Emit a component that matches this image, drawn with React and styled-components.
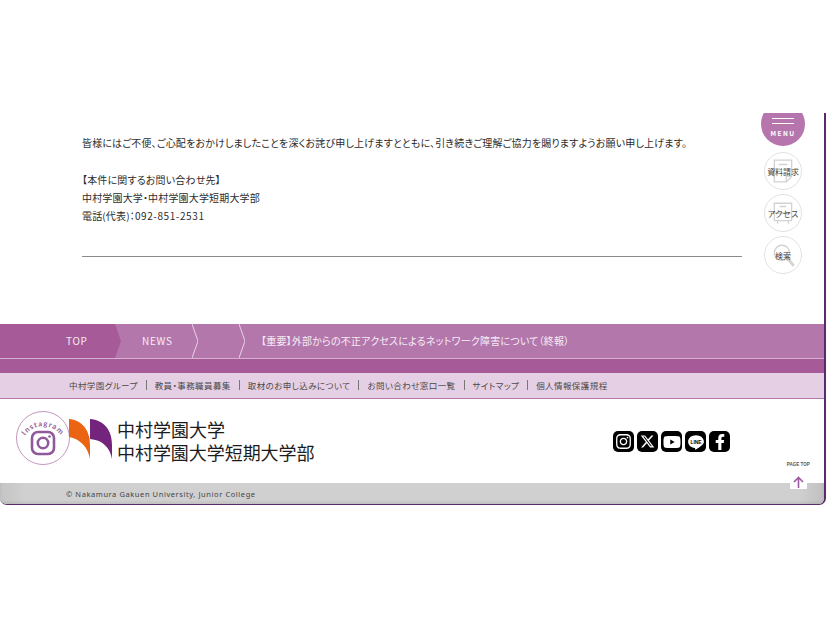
import React from "react";
import styled, { createGlobalStyle } from "styled-components";
import { FaInstagram, FaYoutube, FaFacebookF } from "react-icons/fa";
import { FaXTwitter } from "react-icons/fa6";

const GlobalStyle = createGlobalStyle`
  html, body {
    margin: 0;
    padding: 0;
    background: #fff;
  }
  body {
    font-family: "Noto Sans CJK JP", "Noto Sans", sans-serif;
    color: #333;
  }
`;

const Page = styled.div`
  width: 826px;
  height: 620px;
  padding-top: 113px;
  box-sizing: border-box;
  overflow: hidden;
`;

const Frame = styled.div`
  position: relative;
  height: 392px;
  box-sizing: border-box;
  display: flex;
  flex-direction: column;
  overflow: hidden;
  border-right: 2px solid #5c2a68;
  border-bottom: 1px solid #5c2a68;
  border-radius: 0 0 7px 7px;
`;

const Article = styled.div`
  height: 211px;
  flex: none;
  padding: 21px 0 0 82px;
  box-sizing: border-box;
`;

const Line = styled.p`
  margin: ${(p) => p.$gap || 0}px 0 0;
  font-size: 10px;
  line-height: 18px;
  letter-spacing: 0.16px;
  font-feature-settings: "palt";
  color: #2c2c2c;
  white-space: nowrap;
`;

const Phone = styled.span`
  letter-spacing: 0.6px;
`;

const Rule = styled.hr`
  width: 660px;
  margin: 31px 0 0;
  border: 0;
  border-top: 1px solid #8a8a8a;
`;

const Crumbs = styled.div`
  height: 34px;
  flex: none;
  display: flex;
  background: #b377ac;
  color: #f6ecf5;
  font-size: 10px;
  line-height: 33px;
  letter-spacing: 0.7px;
`;

const CrumbTop = styled.div`
  width: 121px;
  padding-left: 66px;
  box-sizing: border-box;
  background: #a65a97;
  clip-path: polygon(0 0, 115px 0, 121px 50%, 115px 100%, 0 100%);
`;

const Crumb = styled.div`
  position: relative;
  width: ${(p) => p.$width}px;
  padding-left: ${(p) => p.$pad || 0}px;
  box-sizing: border-box;
  white-space: nowrap;
  letter-spacing: ${(p) => p.$spacing || 0.7}px;
  font-feature-settings: "palt";
`;

const Chevron = styled.svg`
  position: absolute;
  top: 0;
  right: 0;
  width: 6px;
  height: 34px;
`;

const Band = styled.div`
  height: 14px;
  flex: none;
  border-top: 1px solid #d6b4d0;
  background: #a65a97;
`;

const SubNav = styled.nav`
  height: 26px;
  flex: none;
  display: flex;
  align-items: center;
  padding: 0 0 2px 61px;
  box-sizing: border-box;
  background: #e5cfe4;
  border-bottom: 1px solid #b27cb0;
`;

const SubLink = styled.a`
  padding: 0 8px;
  font-size: 8.5px;
  line-height: 10px;
  letter-spacing: 0.42px;
  font-feature-settings: "palt";
  color: #4a4a4a;
  border-left: ${(p) => (p.$first ? "0" : "1px solid #777")};
  white-space: nowrap;
`;

const Footer = styled.div`
  height: 84px;
  flex: none;
  display: flex;
  align-items: center;
  padding-left: 16px;
  box-sizing: border-box;
  background: #fff;
`;

const InstaBadge = styled.svg`
  width: 54px;
  height: 54px;
  flex: none;
  margin-top: -7px;
`;

const Mark = styled.svg`
  width: 46px;
  height: 42px;
  flex: none;
  margin: -7px 0 0 -1px;
`;

const SchoolNames = styled.div`
  margin: -1px 0 0 2px;
  width: 496px;
  flex: none;
  color: #1c1c1c;
  font-size: 18px;
  line-height: 23px;
  font-weight: 400;
`;

const SchoolName = styled.div`
  white-space: nowrap;
  letter-spacing: ${(p) => p.$spacing}px;
`;

const Socials = styled.div`
  display: flex;
  gap: 3px;
  margin-top: 1px;
`;

const Social = styled.a`
  width: 21px;
  height: 21px;
  border-radius: 5px;
  background: #000;
  color: #fff;
  display: flex;
  align-items: center;
  justify-content: center;
  font-size: ${(p) => p.$size || 17}px;
`;

const Copy = styled.div`
  flex: 1;
  display: flex;
  align-items: center;
  padding-left: 66px;
  background: linear-gradient(90deg, #c4c4c4, #d0d0d0 3%, #d0d0d0 97%, #c0c0c0);
  font-size: 7.5px;
  letter-spacing: 0.58px;
  font-family: "Noto Sans", sans-serif;
  color: #444;
  box-shadow: inset 0 -2px 3px rgba(0, 0, 0, 0.08);
`;

const PageTop = styled.a`
  position: absolute;
  left: 787px;
  top: 345px;
  width: 22px;
  display: flex;
  flex-direction: column;
  align-items: center;
`;

const PageTopLabel = styled.span`
  font-size: 6px;
  line-height: 12px;
  font-weight: 700;
  color: #555;
  font-family: "Liberation Sans", sans-serif;
  transform: scaleX(0.75);
  white-space: nowrap;
`;

const PageTopBox = styled.span`
  margin-top: 5px;
  width: 17px;
  height: 14px;
  background: #fff;
  display: flex;
  justify-content: center;
`;

const Side = styled.aside`
  position: absolute;
  top: -11px;
  left: 761px;
  width: 44px;
  display: flex;
  flex-direction: column;
  align-items: center;
`;

const MenuButton = styled.div`
  width: 44px;
  height: 44px;
  border-radius: 50%;
  background: #b675ad;
  display: flex;
  flex-direction: column;
  align-items: center;
  padding-top: 16px;
  box-sizing: border-box;
`;

const MenuBar = styled.span`
  width: 22px;
  height: 1px;
  margin-bottom: 4px;
  background: #fff;
`;

const MenuLabel = styled.span`
  margin-top: 1px;
  font-size: 6.5px;
  line-height: 8px;
  font-weight: 700;
  letter-spacing: 1.4px;
  color: #fff;
`;

const SideCircle = styled.div`
  position: relative;
  width: 38px;
  height: 38px;
  box-sizing: border-box;
  margin-top: ${(p) => p.$top}px;
  border-radius: 50%;
  border: 1px solid #e2e2e2;
  background: #fff;
  display: flex;
  align-items: center;
  justify-content: center;
  font-size: 8px;
  letter-spacing: -0.1px;
  color: #444;
`;

const SideIcon = styled.svg`
  position: absolute;
  left: 5px;
  top: 5px;
  width: 26px;
  height: 26px;
  fill: none;
  stroke: #d2d2d2;
  stroke-width: 1.2;
`;

const SideText = styled.span`
  position: relative;
  white-space: nowrap;
`;

const LineIcon = () => (
  <svg width="18" height="18" viewBox="0 0 24 24">
    <path
      fill="#fff"
      d="M12 3C6.200 3 1.500 6.800 1.500 11.500c0 4.200 3.700 7.700 8.800 8.400.7.200.6.500.5 1.200 0 .4-.3 1.600.9 1 1.200-.6 6.400-3.800 8.700-6.400C22 14 22.500 12.800 22.500 11.500 22.500 6.800 17.800 3 12 3z"
    />
    <text x="12" y="14" fontSize="6.500" fontWeight="700" fontFamily="Liberation Sans, sans-serif" textAnchor="middle" fill="#000">
      LINE
    </text>
  </svg>
);

const links = [
  "中村学園グループ",
  "教員・事務職員募集",
  "取材のお申し込みについて",
  "お問い合わせ窓口一覧",
  "サイトマップ",
  "個人情報保護規程",
];

export default function App() {
  return (
    <Page>
      <GlobalStyle />
      <Frame>
        <Article>
          <Line>皆様にはご不便、ご心配をおかけしましたことを深くお詫び申し上げますとともに、引き続きご理解ご協力を賜りますようお願い申し上げます。</Line>
          <Line $gap={19}>【本件に関するお問い合わせ先】</Line>
          <Line>中村学園大学・中村学園大学短期大学部</Line>
          <Line>電話(代表)：<Phone>092-851-2531</Phone></Line>
          <Rule />
        </Article>

        <Crumbs>
          <CrumbTop>TOP</CrumbTop>
          <Crumb $width={77} $pad={21}>
            NEWS
            <Chevron viewBox="0 0 6 34"><path d="M0 0 L6 17 L0 34" fill="none" stroke="#e6d3e3" strokeWidth="1" /></Chevron>
          </Crumb>
          <Crumb $width={47}>
            <Chevron viewBox="0 0 6 34"><path d="M0 0 L6 17 L0 34" fill="none" stroke="#e6d3e3" strokeWidth="1" /></Chevron>
          </Crumb>
          <Crumb $width={500} $pad={16} $spacing={0.2}>【重要】外部からの不正アクセスによるネットワーク障害について（終報）</Crumb>
        </Crumbs>
        <Band />
        <SubNav>
          {links.map((l, i) => (
            <SubLink key={l} $first={i === 0}>{l}</SubLink>
          ))}
        </SubNav>

        <Footer>
          <InstaBadge viewBox="0 0 54 54">
            <circle cx="27" cy="27" r="26.500" fill="#fff" stroke="#b27cb0" strokeWidth="0.8" />
            <defs>
              <path id="instaArc" d="M6 32 A21.500 21.500 0 0 1 48 32" />
            </defs>
            <text fontSize="7.500" fontWeight="700" letterSpacing="1" fill="#8d5a96" fontFamily="Lato, sans-serif">
              <textPath href="#instaArc" startOffset="50%" textAnchor="middle">Instagram</textPath>
            </text>
            <rect x="16" y="21" width="22" height="22" rx="6" fill="none" stroke="#8f5a9c" strokeWidth="2.600" />
            <circle cx="27" cy="32" r="5.200" fill="none" stroke="#8f5a9c" strokeWidth="2.600" />
            <circle cx="33.500" cy="25.500" r="1.300" fill="#8f5a9c" />
          </InstaBadge>
          <Mark viewBox="0 0 46 42">
            <path fill="#ea6413" d="M0 2 C13 3 21 13 21 28 L21 42 C19 30 11 22 0 20 Z" />
            <path fill="#74247c" d="M21 2 C35 3 43 13 43 28 L43 42 C41 30 33 23 21 22 Z" />
          </Mark>
          <SchoolNames>
            <SchoolName $spacing={0}>中村学園大学</SchoolName>
            <SchoolName $spacing={-0.05}>中村学園大学短期大学部</SchoolName>
          </SchoolNames>
          <Socials>
            <Social><FaInstagram /></Social>
            <Social $size={15}><FaXTwitter /></Social>
            <Social $size={18}><FaYoutube /></Social>
            <Social><LineIcon /></Social>
            <Social $size={16}><FaFacebookF /></Social>
          </Socials>
        </Footer>
        <Copy>© Nakamura Gakuen University, Junior College</Copy>

        <PageTop>
          <PageTopLabel>PAGE TOP</PageTopLabel>
          <PageTopBox>
            <svg width="13" height="14" viewBox="0 0 13 14">
              <path d="M6.500 13 V3 M2 7 L6.500 2.500 L11 7" fill="none" stroke="#9c5aa0" strokeWidth="1.600" />
            </svg>
          </PageTopBox>
        </PageTop>

        <Side>
          <MenuButton>
            <MenuBar />
            <MenuBar />
            <MenuLabel>MENU</MenuLabel>
          </MenuButton>
          <SideCircle $top={6}>
            <SideIcon viewBox="0 0 24 24">
              <path d="M4 2 H20 V17 L15 22 H4 Z M15 22 V17 H20 M8 6 H16" />
            </SideIcon>
            <SideText>資料請求</SideText>
          </SideCircle>
          <SideCircle $top={4}>
            <SideIcon viewBox="0 0 24 24">
              <path d="M4 3 H20 V19 H4 Z M4 12 H20 M9 6 H15 M7 19 V22 M17 19 V22" />
            </SideIcon>
            <SideText>アクセス</SideText>
          </SideCircle>
          <SideCircle $top={4}>
            <SideIcon viewBox="0 0 24 24">
              <circle cx="11" cy="10" r="7" />
              <path d="M16 15 L22 22" strokeWidth="2.500" />
            </SideIcon>
            <SideText>検索</SideText>
          </SideCircle>
        </Side>
      </Frame>
    </Page>
  );
}
